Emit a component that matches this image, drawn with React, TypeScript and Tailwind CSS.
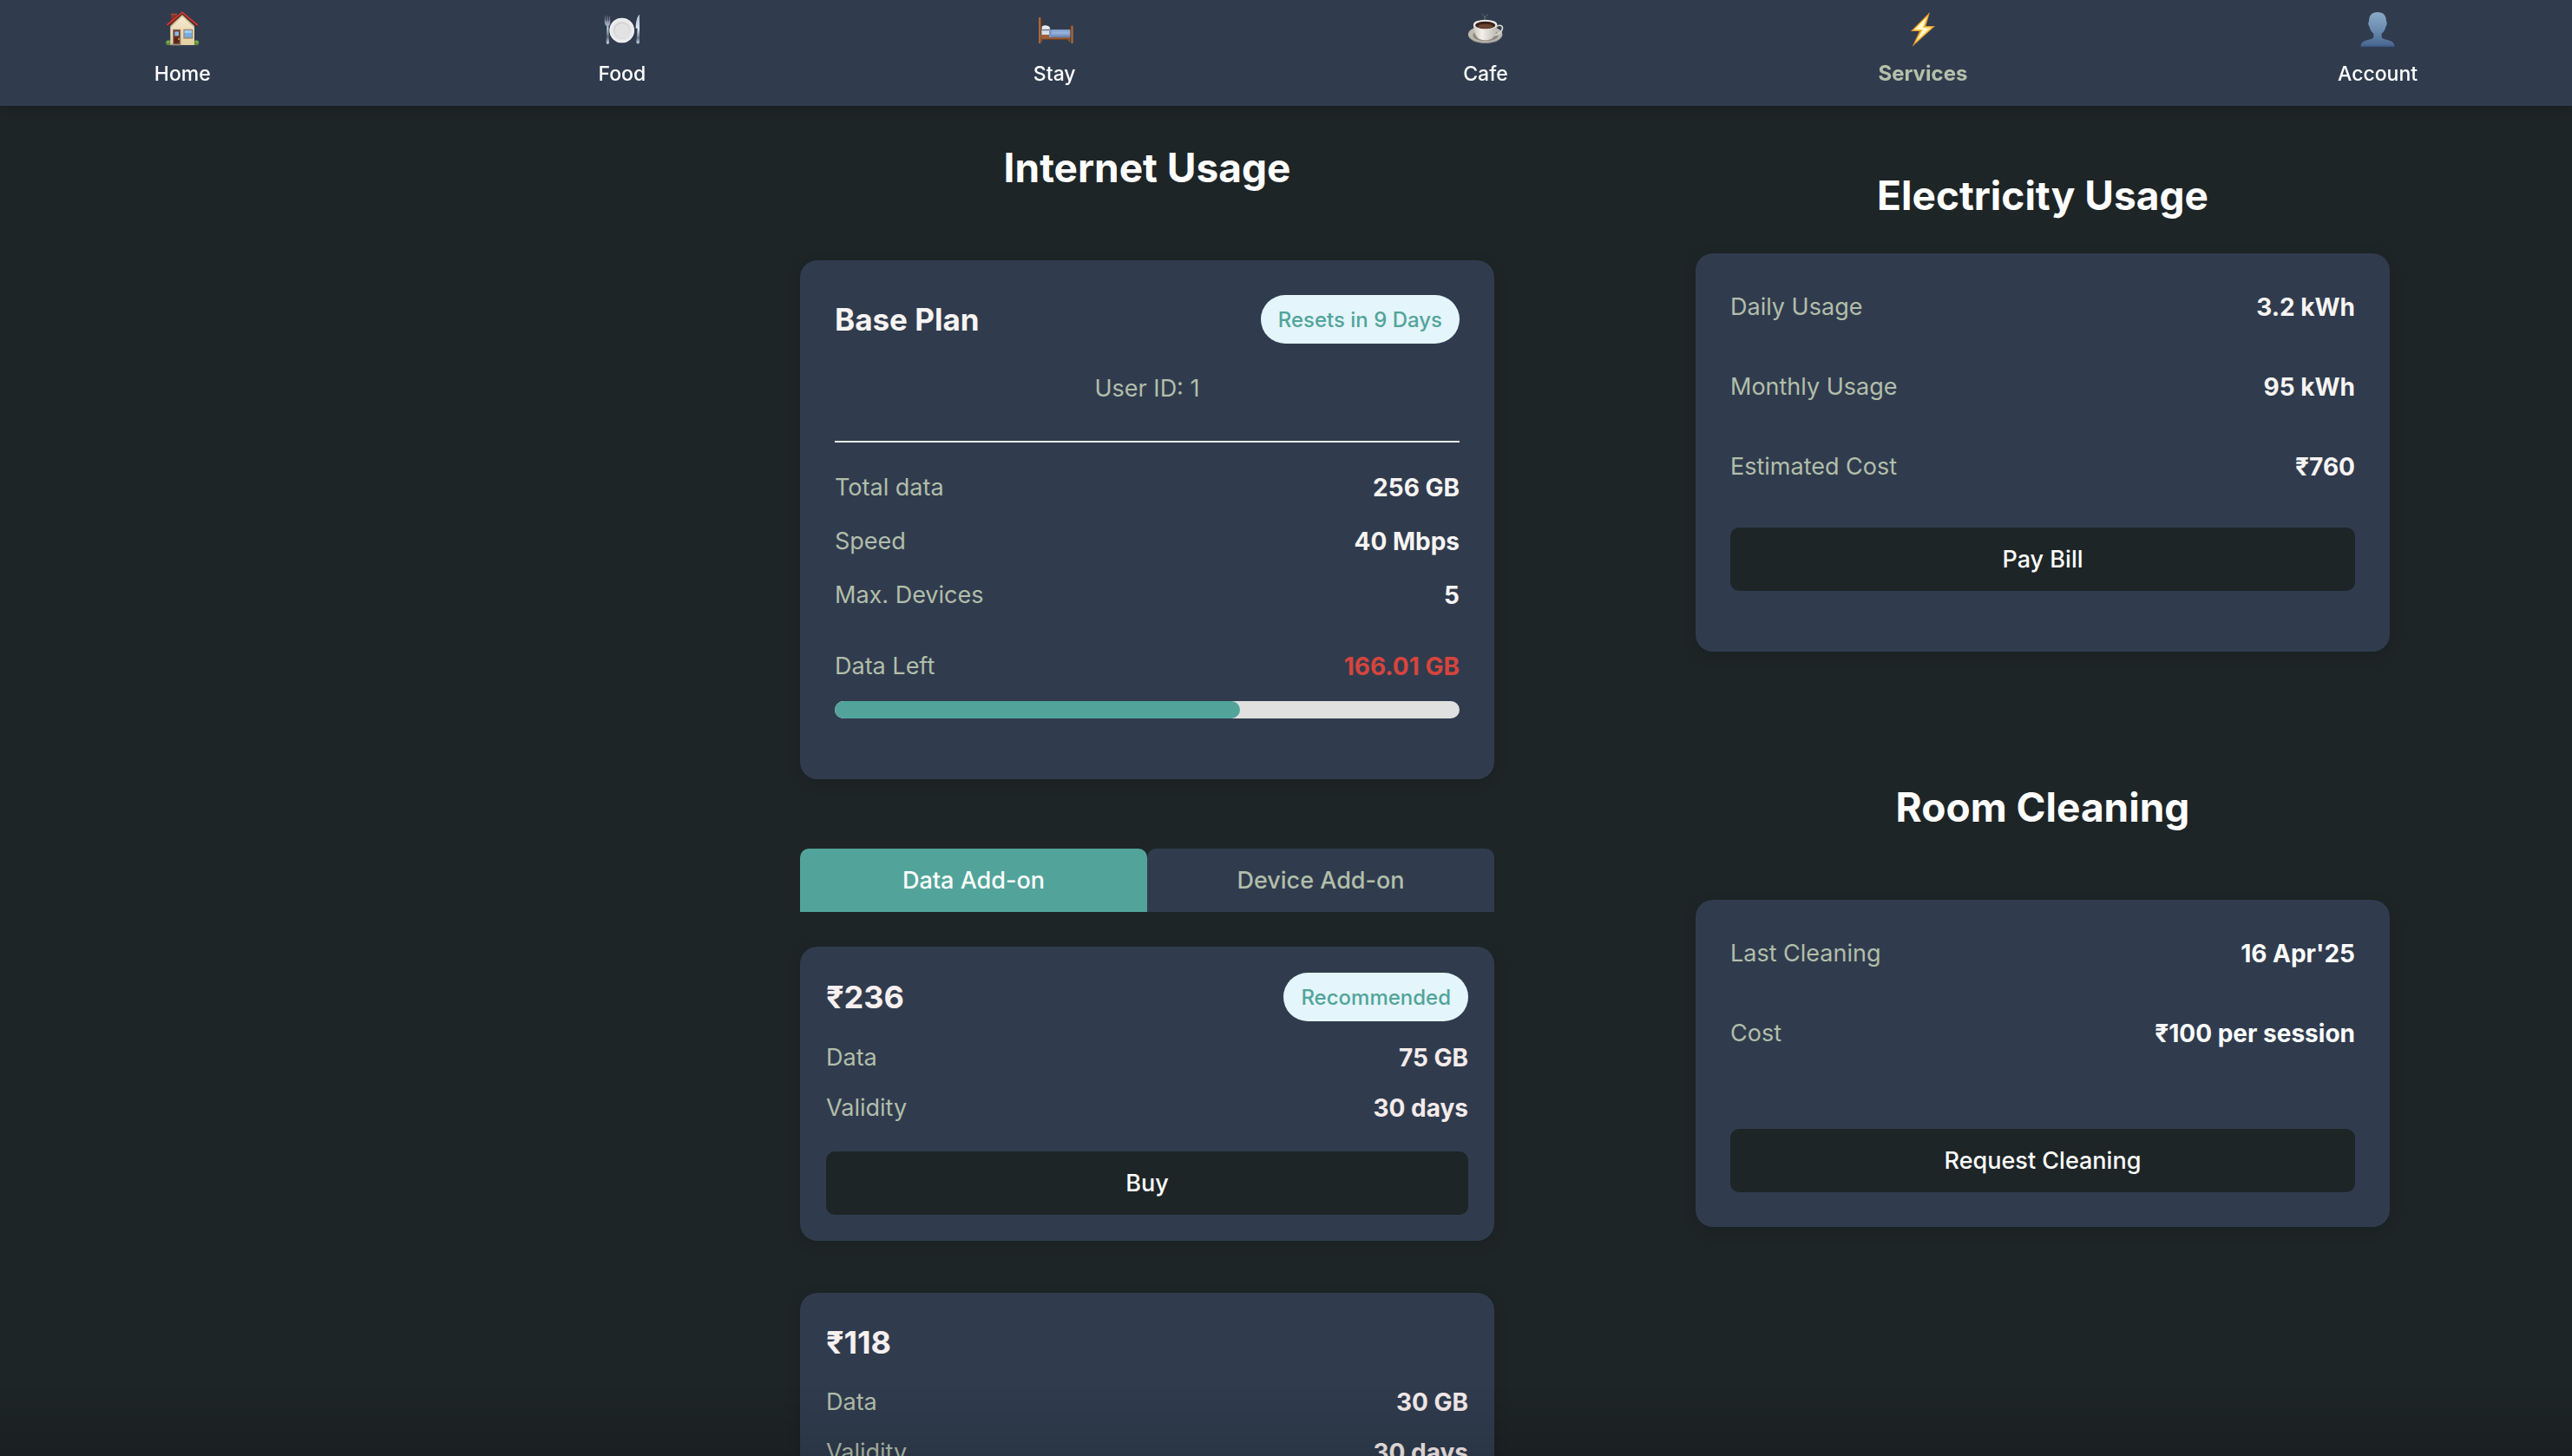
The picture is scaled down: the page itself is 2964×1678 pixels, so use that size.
import { useState, type ReactNode } from 'react';

function NavIcon({ children }: { children: ReactNode }) {
  return (
    <svg className="-mx-3 h-[52px] w-16" viewBox="0 0 192 156" aria-hidden="true">
      {children}
    </svg>
  );
}

function HouseIcon() {
  return (
    <NavIcon>
      <defs>
        <linearGradient id="house-wall" x1="0" y1="0" x2="0" y2="1">
          <stop offset="0" stopColor="#f6ecd0" />
          <stop offset="1" stopColor="#e3cfa2" />
        </linearGradient>
      </defs>
      <path d="M58 24h19v22l-19 16z" fill="#8c3328" />
      <path d="M57 23h21v5H57z" fill="#a8473a" />
      <ellipse cx="49" cy="124" rx="10" ry="9" fill="#5d8a3a" />
      <ellipse cx="144" cy="124" rx="10" ry="9" fill="#5d8a3a" />
      <ellipse cx="47" cy="121" rx="5" ry="4" fill="#7fae52" />
      <ellipse cx="146" cy="121" rx="5" ry="4" fill="#7fae52" />
      <path d="M55 66 96 27l42 39v66H55z" fill="url(#house-wall)" />
      <path d="M96 27 55 66v6l41-39 42 39v-6z" fill="#b39b72" opacity=".6" />
      <path d="M42 65 96 21l54 44" fill="none" stroke="#5d1d18" strokeWidth="8" />
      <path d="M43 63 96 19l53 44" fill="none" stroke="#d23c30" strokeWidth="5" />
      <path d="M63 77h28v55H63z" fill="#9b8a74" />
      <path d="M66 80h22v50H66z" fill="#6f3423" />
      <path d="M70 85h14v15H70z" fill="#86b9ea" />
      <path d="M70 106h14v18H70z" fill="#572519" />
      <circle cx="84" cy="111" r="3" fill="#e0a63c" />
      <path d="M100 77h33v33h-33z" fill="#9b8a74" />
      <path d="M104 81h25v24h-25z" fill="#78abe0" />
      <path d="M104 81h25v9h-25z" fill="#a2cbf2" />
      <path d="M57 128h34v5H57z" fill="#9a8f80" />
    </NavIcon>
  );
}

function PlateIcon() {
  return (
    <NavIcon>
      <defs>
        <linearGradient id="cutlery" x1="0" y1="0" x2="0" y2="1">
          <stop offset="0" stopColor="#59616b" />
          <stop offset=".45" stopColor="#b9cbe3" />
          <stop offset=".75" stopColor="#5d6671" />
          <stop offset="1" stopColor="#c6daf0" />
        </linearGradient>
        <linearGradient id="knife" x1="0" y1="0" x2="0" y2="1">
          <stop offset="0" stopColor="#aebccd" />
          <stop offset=".5" stopColor="#dfe9f4" />
          <stop offset=".8" stopColor="#69737f" />
          <stop offset="1" stopColor="#c6daf0" />
        </linearGradient>
      </defs>
      <path
        d="M36 30h2l1 19h3l1-19h3l1 19h3l1-19h2l2 22c0 8-4 12-6 15l2 55c0 8-10 8-10 0l2-55c-4-3-8-8-8-16z"
        fill="url(#cutlery)"
      />
      <path d="M156 26c-9 5-13 28-13 48h6l-4 46c0 10 11 10 11 0z" fill="url(#knife)" />
      <circle cx="95" cy="81" r="43" fill="#e9e9e9" />
      <circle cx="95" cy="81" r="41" fill="none" stroke="#f6f6f6" strokeWidth="3" />
      <circle cx="95" cy="82" r="30" fill="#d9dde4" />
      <circle cx="95" cy="80" r="28" fill="#cfcfcf" />
      <circle cx="96" cy="82" r="26" fill="#e2e2e2" />
    </NavIcon>
  );
}

function BedIcon() {
  return (
    <NavIcon>
      <defs>
        <linearGradient id="blanket" x1="0" y1="0" x2="0" y2="1">
          <stop offset="0" stopColor="#7f9bc6" />
          <stop offset=".45" stopColor="#9ab3da" />
          <stop offset="1" stopColor="#5f7fb0" />
        </linearGradient>
      </defs>
      <path d="M49 38l6 4v50h-6z" fill="#5e3420" />
      <path d="M42 36h7v90h-7z" fill="#a5673f" />
      <path d="M148 66h7v32h-7z" fill="#5e3420" />
      <path d="M52 79h27v19H52z" fill="#d9dfe8" />
      <path d="M53 68c6-7 24-6 28 4 2 5-2 7-8 7H53z" fill="#e9edf3" />
      <path d="M55 77h24c5 0 3 5-2 5H55z" fill="#3c434d" opacity=".6" />
      <path d="M49 96h102v18H49z" fill="#9d5f3a" />
      <path d="M49 110h102v4H49z" fill="#6d3f26" />
      <path d="M78 78h73v27H78z" fill="url(#blanket)" />
      <path d="M78 78h9v27h-9z" fill="#7896c4" />
      <path d="M49 112h6v6l-6 4zM151 112h-7v6l7 4z" fill="#8a5232" />
      <path d="M154 65h7v61h-7z" fill="#a5673f" />
    </NavIcon>
  );
}

function CoffeeIcon() {
  return (
    <NavIcon>
      <defs>
        <linearGradient id="cup" x1="0" y1="0" x2="1" y2="0">
          <stop offset="0" stopColor="#c9c6be" />
          <stop offset=".35" stopColor="#f3f1ec" />
          <stop offset="1" stopColor="#bcb8af" />
        </linearGradient>
      </defs>
      <path
        d="M84 25c4 5 9 5 8 11s2 5 1 10M103 26c-2 6-8 5-7 11"
        fill="none"
        stroke="#8d99a8"
        strokeWidth="3"
        strokeLinecap="round"
        opacity=".55"
      />
      <ellipse cx="95" cy="97" rx="59" ry="29" fill="#8f8c84" />
      <ellipse cx="95" cy="94" rx="59" ry="28" fill="#bdbab1" />
      <ellipse cx="96" cy="98" rx="44" ry="20" fill="#8f8b81" />
      <path d="M133 68c16-10 26 0 19 13-5 9-15 15-26 17" fill="none" stroke="#d9d8d5" strokeWidth="5" />
      <path d="M54 60c0 28 8 43 21 51 12 5 28 5 40 0 13-8 21-23 21-51z" fill="url(#cup)" />
      <ellipse cx="95" cy="61" rx="41" ry="17" fill="#efede8" />
      <ellipse cx="95" cy="63" rx="35" ry="13" fill="#3a231a" />
      <ellipse cx="95" cy="67" rx="26" ry="8" fill="#6a4331" />
    </NavIcon>
  );
}

function BoltIcon() {
  return (
    <NavIcon>
      <defs>
        <linearGradient id="bolt" x1="0" y1="0" x2="1" y2="1">
          <stop offset="0" stopColor="#fff3a6" />
          <stop offset=".5" stopColor="#fffbe0" />
          <stop offset="1" stopColor="#fbd04a" />
        </linearGradient>
      </defs>
      <path d="M120 18 54 84h30L59 137l79-71h-32z" fill="#eb9a32" />
      <path d="M112 32 65 79h29L71 121l55-50H97z" fill="url(#bolt)" stroke="#fcd14f" strokeWidth="3" />
    </NavIcon>
  );
}

function PersonIcon() {
  return (
    <NavIcon>
      <defs>
        <linearGradient id="person" x1="0" y1="0" x2="0" y2="1">
          <stop offset="0" stopColor="#8aaac8" />
          <stop offset=".5" stopColor="#6c8db0" />
          <stop offset="1" stopColor="#48658e" />
        </linearGradient>
      </defs>
      <path
        d="M96 18c20 0 30 12 30 32 4 3 2 14-2 18-2 11-7 18-14 24v12c3 8 16 8 27 12 12 4 17 10 17 20H38c0-10 5-16 17-20 11-4 24-4 27-12V92c-7-6-12-13-14-24-4-4-6-15-2-18 0-20 10-32 30-32z"
        fill="url(#person)"
      />
      <path d="M38 133h116v4H38z" fill="#3d608f" />
    </NavIcon>
  );
}

const navItems = [
  { label: 'Home', icon: <HouseIcon /> },
  { label: 'Food', icon: <PlateIcon /> },
  { label: 'Stay', icon: <BedIcon /> },
  { label: 'Cafe', icon: <CoffeeIcon /> },
  { label: 'Services', icon: <BoltIcon />, active: true },
  { label: 'Account', icon: <PersonIcon /> },
];

function NavBar() {
  return (
    <nav className="sticky top-0 z-10 flex justify-between bg-[#303c4e] px-[6%] pt-2 pb-[22px] shadow-[0_2px_12px_rgba(0,0,0,0.2)]">
      {navItems.map(({ label, icon, active }) => (
        <a
          key={label}
          href={`#${label.toLowerCase()}`}
          aria-current={active ? 'page' : undefined}
          className={`flex flex-col items-center gap-[10px] ${
            active
              ? '-mx-5 text-2xl/[30px] font-bold text-[#b5c0aa]'
              : 'text-[23px]/[30px] font-medium text-white'
          }`}
        >
          {icon}
          {label}
        </a>
      ))}
    </nav>
  );
}

function Heading({ children }: { children: ReactNode }) {
  return <h2 className="text-center text-[46px] leading-[56px] font-bold text-white">{children}</h2>;
}

function Card({ className, children }: { className: string; children: ReactNode }) {
  return (
    <div className={`rounded-[20px] bg-[#303c4e] shadow-[0_4px_16px_rgba(0,0,0,0.12)] ${className}`}>{children}</div>
  );
}

function Row({ label, value, tone }: { label: string; value: string; tone: string }) {
  return (
    <div className="flex justify-between leading-10">
      <dt className="text-[27px] text-[#b2beaa]">{label}</dt>
      <dd className={`text-[28px] font-bold ${tone}`}>{value}</dd>
    </div>
  );
}

function Pill({ children }: { children: ReactNode }) {
  return (
    <span className="h-14 rounded-[28px] bg-[#e4f5fb] px-5 text-2xl leading-[58px] font-medium text-[#52a49a]">
      {children}
    </span>
  );
}

function ActionButton({ className, children }: { className: string; children: ReactNode }) {
  return (
    <button
      type="button"
      className={`h-[73px] w-full rounded-[10px] bg-[#1e2527] pt-0.5 text-[27px] font-medium text-white ${className}`}
    >
      {children}
    </button>
  );
}

function BasePlan() {
  const total = 256;
  const left = 166.01;
  return (
    <Card className="mt-[79px] px-10 pt-10 pb-[70px]">
      <div className="flex items-center justify-between">
        <h3 className="text-[35px] font-bold text-[#f8f4f3]">Base Plan</h3>
        <Pill>Resets in 9 Days</Pill>
      </div>
      <p className="mt-8 text-center text-[27px] leading-10 text-[#b2beaa]">User ID: 1</p>
      <hr className="mt-10 border-t-2 border-[#e6eae8]" />
      <dl className="mt-8 flex flex-col gap-[22px]">
        <Row label="Total data" value={`${total} GB`} tone="text-[#f8f4f3]" />
        <Row label="Speed" value="40 Mbps" tone="text-[#f8f4f3]" />
        <Row label="Max. Devices" value="5" tone="text-[#f8f4f3]" />
      </dl>
      <dl className="mt-[42px]">
        <Row label="Data Left" value={`${left} GB`} tone="text-[#d6453d]" />
      </dl>
      <div
        role="progressbar"
        aria-label="Data left"
        aria-valuemin={0}
        aria-valuemax={total}
        aria-valuenow={left}
        className="mt-5 h-5 overflow-hidden rounded-full bg-[#e0e0e0]"
      >
        <div className="h-full rounded-full bg-[#52a49a]" style={{ width: `${(left / total) * 100}%` }} />
      </div>
    </Card>
  );
}

const addOns = [
  { price: '₹236', data: '75 GB', validity: '30 days', recommended: true },
  { price: '₹118', data: '30 GB', validity: '30 days', recommended: false },
];

const tabs = ['Data Add-on', 'Device Add-on'];

function AddOns() {
  const [selected, setSelected] = useState(tabs[0]);
  return (
    <>
      <div role="tablist" className="mt-20 flex">
        {tabs.map((tab) => (
          <button
            key={tab}
            type="button"
            role="tab"
            aria-selected={tab === selected}
            onClick={() => setSelected(tab)}
            className={`h-[73px] flex-1 rounded-t-[10px] pt-0.5 text-[27px] font-medium ${
              tab === selected ? 'bg-[#52a49a] text-white' : 'bg-[#303c4e] text-[#b2beaa]'
            }`}
          >
            {tab}
          </button>
        ))}
      </div>
      <div className="mt-10 flex flex-col gap-[60px]">
        {addOns.map((item) => (
          <Card key={item.price} className="p-[30px]">
            <div className="flex items-center justify-between">
              <h3 className="text-4xl leading-[54px] font-bold text-[#f8f0f0]">{item.price}</h3>
              {item.recommended && <Pill>Recommended</Pill>}
            </div>
            <dl className="mt-[22px] flex flex-col gap-[18px]">
              <Row label="Data" value={item.data} tone="text-[#f5ebeb]" />
              <Row label="Validity" value={item.validity} tone="text-[#f5ebeb]" />
            </dl>
            <ActionButton className="mt-[30px]">Buy</ActionButton>
          </Card>
        ))}
      </div>
    </>
  );
}

export default function App() {
  return (
    <div className="h-screen overflow-x-hidden overflow-y-auto bg-[#1e2527] font-['Inter','Noto_Sans',sans-serif] [scrollbar-width:none]">
      <NavBar />
      <main className="grid grid-cols-[922fr_800fr_232fr_800fr_210fr] pb-20">
        <section className="col-start-2 pt-[43px]">
          <Heading>Internet Usage</Heading>
          <BasePlan />
          <AddOns />
        </section>
        <div className="col-start-4 pt-[75px]">
          <section>
            <Heading>Electricity Usage</Heading>
            <Card className="mt-[39px] px-10 pt-[42px] pb-[70px]">
              <dl className="flex flex-col gap-[52px]">
                <Row label="Daily Usage" value="3.2 kWh" tone="text-[#f8f4f3]" />
                <Row label="Monthly Usage" value="95 kWh" tone="text-[#f8f4f3]" />
                <Row label="Estimated Cost" value="₹760" tone="text-[#f8f4f3]" />
              </dl>
              <ActionButton className="mt-[50px]">Pay Bill</ActionButton>
            </Card>
          </section>
          <section className="mt-[151px]">
            <Heading>Room Cleaning</Heading>
            <Card className="mt-[79px] px-10 pt-[42px] pb-10">
              <dl className="flex flex-col gap-[52px]">
                <Row label="Last Cleaning" value="16 Apr'25" tone="text-white" />
                <Row label="Cost" value="₹100 per session" tone="text-white" />
              </dl>
              <ActionButton className="mt-[90px]">Request Cleaning</ActionButton>
            </Card>
          </section>
        </div>
      </main>
      <div className="pointer-events-none fixed inset-x-0 bottom-0 h-20 bg-gradient-to-t from-black/12 to-transparent" />
    </div>
  );
}
